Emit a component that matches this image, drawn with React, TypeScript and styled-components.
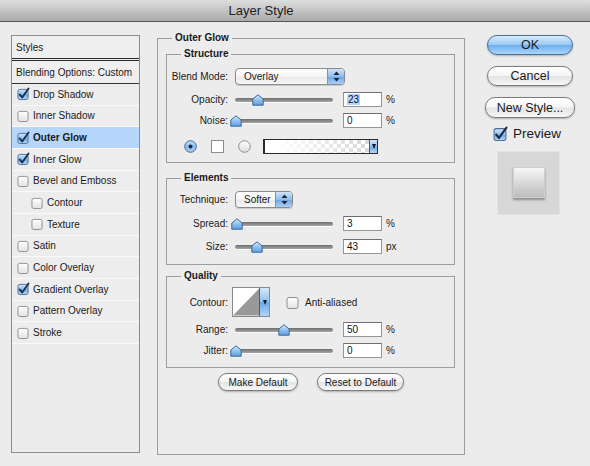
import React from "react";
import styled, { createGlobalStyle } from "styled-components";

const Global = createGlobalStyle`
  html, body { margin: 0; padding: 0; }
  body {
    width: 590px; height: 466px; overflow: hidden; background: #ececec;
    font-family: "Liberation Sans", Arial, sans-serif; font-size: 10px; color: #1a1a1a;
  }
`;

const Window = styled.div`
  width: 590px; height: 466px; display: flex; flex-direction: column; background: #ececec;
`;

const TitleBar = styled.div`
  height: 21px; border-bottom: 1px solid #555;
  background: linear-gradient(#dedede, #c4c4c4 50%, #a9a9a9);
  display: flex; align-items: center; justify-content: center;
  padding-right: 68px; font-size: 13px; color: #222;
`;

const Body = styled.div`
  display: flex; align-items: flex-start; padding: 13px 0 0 11px;
`;

/* ---------- Sidebar ---------- */
const Sidebar = styled.div`
  width: 129px; height: 418px; box-sizing: border-box;
  border: 1px solid #8d8d8d; background: #ebebeb;
  display: flex; flex-direction: column;
`;
const SideHeader = styled.div<{ $double?: boolean }>`
  height: 22px; display: flex; align-items: center; padding-left: 4px;
  background: #efefef; color: #1a1a1a;
  border-bottom: ${(p) => (p.$double ? "3px double #2a2a2a" : "1px solid #333")};
`;
const SideRow = styled.div<{ $sel?: boolean; $indent?: boolean }>`
  height: 21.67px; box-sizing: border-box; display: flex; align-items: center; gap: 4px;
  padding-left: ${(p) => (p.$indent ? 19 : 5)}px;
  background: ${(p) => (p.$sel ? "#b6d5fb" : "#ededed")};
  border-bottom: 1px solid #f9f9f9;
  font-weight: ${(p) => (p.$sel ? "bold" : "normal")};
`;

/* ---------- Main groups ---------- */
const Main = styled.div`
  margin-left: 17px; margin-top: 3px; width: 308px;
`;
const Group = styled.div<{ $mt?: number; $pb?: number; $h?: number }>`
  box-sizing: border-box; border: 1px solid #9d9d9d;
  margin-top: ${(p) => p.$mt ?? 0}px; padding-bottom: ${(p) => p.$pb ?? 0}px;
  height: ${(p) => (p.$h ? `${p.$h}px` : "auto")};
  display: flex; flex-direction: column;
`;
const Legend = styled.div`
  align-self: flex-start; margin: -7px 0 0 14px; padding: 0 3px; line-height: 12px;
  background: #ececec; font-weight: bold; color: #1a1a1a;
`;
const Inner = styled.div`
  padding: 0 9px 0 8px; display: flex; flex-direction: column;
`;
const Row = styled.div<{ $mt: number }>`
  display: flex; align-items: center; margin-top: ${(p) => p.$mt}px;
`;
const Label = styled.div`
  width: 61px; text-align: right; margin-right: 7px; white-space: nowrap; color: #1a1a1a;
`;
const Unit = styled.span`
  margin-left: 4px; color: #222;
`;

/* select */
const SelectBox = styled.div<{ $w: number }>`
  width: ${(p) => p.$w}px; height: 17px; box-sizing: border-box; display: flex;
  border: 1px solid #8a8a8a; border-radius: 4px; overflow: hidden;
  background: linear-gradient(#ffffff, #f4f4f4 50%, #e9e9e9 51%, #f7f7f7);
  box-shadow: 0 1px 1px rgba(0,0,0,0.15);
`;
const SelectText = styled.div`
  flex: 1; display: flex; align-items: center; padding-left: 8px;
`;
const Stepper = styled.div`
  width: 16px; border-left: 1px solid #7b93b6;
  background: linear-gradient(#cfe4fa, #8fbdec 50%, #6ca5e3 51%, #a9d0f6);
  display: flex; align-items: center; justify-content: center;
`;

/* slider */
const SliderWrap = styled.div`
  position: relative; width: 98px; height: 12px; display: flex; align-items: center;
`;
const Track = styled.div`
  width: 100%; height: 4px; border-radius: 2px;
  background: linear-gradient(#6e6e6e, #a6a6a6);
  box-shadow: 0 1px 0 #fafafa;
`;
const Thumb = styled.svg`
  position: absolute; top: 0; width: 12px; height: 12px; margin-left: -6px;
`;

/* input */
const Field = styled.div`
  margin-left: 10px; width: 39px; height: 15px; box-sizing: border-box;
  border: 1px solid #959595; border-top-color: #6f6f6f; background: #fff;
  display: flex; align-items: center; padding-left: 3px; color: #111;
`;
const Sel = styled.span`
  background: #b5d5ff; padding: 0 1px;
`;

/* color row */
const Swatch = styled.div`
  width: 13px; height: 13px; box-sizing: border-box; border: 1px solid #8d8d8d; background: #fff;
`;
const GradBox = styled.div`
  width: 115px; height: 15px; box-sizing: border-box; border: 1px solid #2b2b2b;
  border-left-width: 2px; display: flex; margin-left: -2px;
`;
const GradFill = styled.div`
  flex: 1;
  background:
    linear-gradient(to right, #ffffff 10%, rgba(255,255,255,0.1)),
    repeating-conic-gradient(#d4d4d4 0 25%, #ffffff 0 50%) 0 0 / 8px 8px;
`;
const MiniBtn = styled.div<{ $w: number }>`
  width: ${(p) => p.$w}px; border-left: 1px solid #3b5f8e;
  background: linear-gradient(#d5e8fb, #90c0ee 50%, #6ba6e4 51%, #b1d6f8);
  display: flex; align-items: center; justify-content: center;
`;
const ContourBox = styled.div`
  width: 38px; height: 30px; box-sizing: border-box; border: 1px solid #8a8a8a;
  display: flex; background: #fff; margin-left: -3px;
`;
const AntiLabel = styled.span`
  margin-left: 6px;
`;

/* buttons */
const BtnRow = styled.div`
  display: flex; justify-content: center; gap: 19px; margin-top: 5px; padding-left: 1px;
`;
const Pill = styled.div<{ $w: number; $primary?: boolean; $h?: number; $fs?: number; $mt?: number; $ml?: number }>`
  width: ${(p) => p.$w}px; height: ${(p) => p.$h ?? 18}px; box-sizing: border-box;
  margin-top: ${(p) => p.$mt ?? 0}px; margin-left: ${(p) => p.$ml ?? 0}px;
  border: 1px solid ${(p) => (p.$primary ? "#4d6d96" : "#7c7c7c")};
  border-radius: 10px; display: flex; align-items: center; justify-content: center;
  font-size: ${(p) => p.$fs ?? 10}px; color: #1a1a1a; white-space: nowrap;
  background: ${(p) =>
    p.$primary
      ? "linear-gradient(#d6ebfd, #9ccaf3 48%, #6eaeec 52%, #a9d6fc)"
      : "linear-gradient(#ffffff, #f5f5f5 48%, #e4e4e4 52%, #f7f7f7)"};
  box-shadow: 0 1px 2px rgba(0,0,0,0.25);
`;

/* right column */
const Right = styled.div`
  margin-left: 22px; display: flex; flex-direction: column; align-items: flex-start;
`;
const PreviewRow = styled.div`
  display: flex; align-items: center; gap: 6px; margin: 8px 0 0 6px; font-size: 13.5px; color: #1a1a1a;
`;
const PreviewBox = styled.div`
  margin: 10px 0 0 10px; width: 63px; height: 64px; box-sizing: border-box;
  background: #d7d7d7; border: 1px solid #e2e2e2;
  display: flex; align-items: center; justify-content: center;
`;
const PreviewSquare = styled.div`
  width: 32px; height: 31px; margin-top: -2px; box-sizing: border-box;
  border: 1px solid #cfcfcf; background: linear-gradient(#f6f6f6, #bdbdbd);
  box-shadow: 0 2px 2px rgba(0,0,0,0.35);
`;

/* ---------- drawings ---------- */
let gid = 0;
function Check({ on, size = 11 }: { on: boolean; size?: number }) {
  const id = `cb${gid++}`;
  return (
    <svg width={size + 2} height={size + 2} viewBox="0 0 13 13" style={{ flex: "none", overflow: "visible" }}>
      <defs>
        <linearGradient id={id} x1="0" y1="0" x2="0" y2="1">
          {on ? (
            <>
              <stop offset="0" stopColor="#cfe5fb" />
              <stop offset="0.5" stopColor="#8ec0ef" />
              <stop offset="0.51" stopColor="#6aa7e6" />
              <stop offset="1" stopColor="#b3d8f9" />
            </>
          ) : (
            <>
              <stop offset="0" stopColor="#ffffff" />
              <stop offset="1" stopColor="#e2e2e2" />
            </>
          )}
        </linearGradient>
      </defs>
      <rect x="1" y="1.5" width="11" height="11" rx="2" fill={`url(#${id})`} stroke={on ? "#4f6f98" : "#8c8c8c"} strokeWidth="1" />
      {on && <path d="M3 7 L5.6 10.2 L12.5 0.5" fill="none" stroke="#1d2b45" strokeWidth="2" strokeLinecap="round" strokeLinejoin="round" />}
    </svg>
  );
}

function Radio({ on }: { on: boolean }) {
  const id = `rd${gid++}`;
  return (
    <svg width="13" height="13" viewBox="0 0 13 13" style={{ flex: "none" }}>
      <defs>
        <linearGradient id={id} x1="0" y1="0" x2="0" y2="1">
          {on ? (
            <>
              <stop offset="0" stopColor="#c8e2fb" />
              <stop offset="0.5" stopColor="#86bbee" />
              <stop offset="1" stopColor="#a6d1f8" />
            </>
          ) : (
            <>
              <stop offset="0" stopColor="#ffffff" />
              <stop offset="1" stopColor="#dcdcdc" />
            </>
          )}
        </linearGradient>
      </defs>
      <circle cx="6.5" cy="6.5" r="5.8" fill={`url(#${id})`} stroke={on ? "#4c6c95" : "#8f8f8f"} strokeWidth="1" />
      {on && <circle cx="6.5" cy="6.5" r="2" fill="#1c2a40" />}
    </svg>
  );
}

function Slider({ pos }: { pos: number }) {
  const id = `th${gid++}`;
  return (
    <SliderWrap>
      <Track />
      <Thumb viewBox="0 0 12 12" style={{ left: `${pos}%` }}>
        <defs>
          <linearGradient id={id} x1="0" y1="0" x2="0" y2="1">
            <stop offset="0" stopColor="#d9ecfd" />
            <stop offset="0.5" stopColor="#8fc1f0" />
            <stop offset="1" stopColor="#5f9fe2" />
          </linearGradient>
        </defs>
        <path d="M6 0.8 L11.2 5 L11.2 11.2 L0.8 11.2 L0.8 5 Z" fill={`url(#${id})`} stroke="#3f6798" strokeWidth="1" strokeLinejoin="round" />
      </Thumb>
    </SliderWrap>
  );
}

function Arrows() {
  return (
    <svg width="7" height="11" viewBox="0 0 7 11">
      <path d="M3.5 0.5 L6.5 4 L0.5 4 Z" fill="#1a2438" />
      <path d="M3.5 10.5 L6.5 7 L0.5 7 Z" fill="#1a2438" />
    </svg>
  );
}

function Down() {
  return (
    <svg width="4" height="5" viewBox="0 0 4 5">
      <path d="M0 0 L4 0 L2 5 Z" fill="#111a2a" />
    </svg>
  );
}

function Select({ w, text }: { w: number; text: string }) {
  return (
    <SelectBox $w={w}>
      <SelectText>{text}</SelectText>
      <Stepper>
        <Arrows />
      </Stepper>
    </SelectBox>
  );
}

function SliderRow({ mt, label, pos, value, unit, selected }: { mt: number; label: string; pos: number; value: string; unit: string; selected?: boolean }) {
  return (
    <Row $mt={mt}>
      <Label>{label}</Label>
      <Slider pos={pos} />
      <Field>{selected ? <Sel>{value}</Sel> : value}</Field>
      <Unit>{unit}</Unit>
    </Row>
  );
}

const styles: { name: string; on: boolean; sel?: boolean; indent?: boolean }[] = [
  { name: "Drop Shadow", on: true },
  { name: "Inner Shadow", on: false },
  { name: "Outer Glow", on: true, sel: true },
  { name: "Inner Glow", on: true },
  { name: "Bevel and Emboss", on: false },
  { name: "Contour", on: false, indent: true },
  { name: "Texture", on: false, indent: true },
  { name: "Satin", on: false },
  { name: "Color Overlay", on: false },
  { name: "Gradient Overlay", on: true },
  { name: "Pattern Overlay", on: false },
  { name: "Stroke", on: false },
];

const ColorRow = styled(Row)`
  padding-left: 17px; gap: 14px;
`;
const AntiWrap = styled.div`
  display: flex; align-items: center; margin-left: 16px;
`;

export default function App() {
  return (
    <Window>
      <Global />
      <TitleBar>Layer Style</TitleBar>
      <Body>
        <Sidebar>
          <SideHeader $double>Styles</SideHeader>
          <SideHeader>Blending Options: Custom</SideHeader>
          {styles.map((s) => (
            <SideRow key={s.name} $sel={s.sel} $indent={s.indent}>
              <Check on={s.on} size={10} />
              <span>{s.name}</span>
            </SideRow>
          ))}
        </Sidebar>

        <Main>
          <Group $h={417}>
            <Legend>Outer Glow</Legend>
            <Inner>
              <Group $mt={10} $pb={8}>
                <Legend>Structure</Legend>
                <Row $mt={8}>
                  <Label>Blend Mode:</Label>
                  <Select w={110} text="Overlay" />
                </Row>
                <SliderRow mt={7} label="Opacity:" pos={23} value="23" unit="%" selected />
                <SliderRow mt={6} label="Noise:" pos={1} value="0" unit="%" />
                <ColorRow $mt={11}>
                  <Radio on />
                  <Swatch />
                  <Radio on={false} />
                  <GradBox>
                    <GradFill />
                    <MiniBtn $w={7}>
                      <Down />
                    </MiniBtn>
                  </GradBox>
                </ColorRow>
              </Group>

              <Group $mt={15} $pb={10}>
                <Legend>Elements</Legend>
                <Row $mt={7}>
                  <Label>Technique:</Label>
                  <Select w={58} text="Softer" />
                </Row>
                <SliderRow mt={8} label="Spread:" pos={2} value="3" unit="%" />
                <SliderRow mt={8} label="Size:" pos={22} value="43" unit="px" />
              </Group>

              <Group $mt={11} $pb={9}>
                <Legend>Quality</Legend>
                <Row $mt={5}>
                  <Label>Contour:</Label>
                  <ContourBox>
                    <svg width="27" height="28" viewBox="0 0 27 28" style={{ display: "block" }}>
                      <path d="M0 28 L27 0 L27 28 Z" fill="#999" />
                    </svg>
                    <MiniBtn $w={9}>
                      <Down />
                    </MiniBtn>
                  </ContourBox>
                  <AntiWrap>
                    <Check on={false} size={11} />
                    <AntiLabel>Anti-aliased</AntiLabel>
                  </AntiWrap>
                </Row>
                <SliderRow mt={5} label="Range:" pos={50} value="50" unit="%" />
                <SliderRow mt={6} label="Jitter:" pos={1} value="0" unit="%" />
              </Group>

              <BtnRow>
                <Pill $w={80}>Make Default</Pill>
                <Pill $w={87}>Reset to Default</Pill>
              </BtnRow>
            </Inner>
          </Group>
        </Main>

        <Right>
          <Pill $w={86} $h={20} $fs={12.5} $primary>OK</Pill>
          <Pill $w={86} $h={20} $fs={12.5} $mt={11}>Cancel</Pill>
          <Pill $w={90} $h={21} $fs={12.5} $mt={11} $ml={-2}>New Style...</Pill>
          <PreviewRow>
            <Check on size={12} />
            <span>Preview</span>
          </PreviewRow>
          <PreviewBox>
            <PreviewSquare />
          </PreviewBox>
        </Right>
      </Body>
    </Window>
  );
}
